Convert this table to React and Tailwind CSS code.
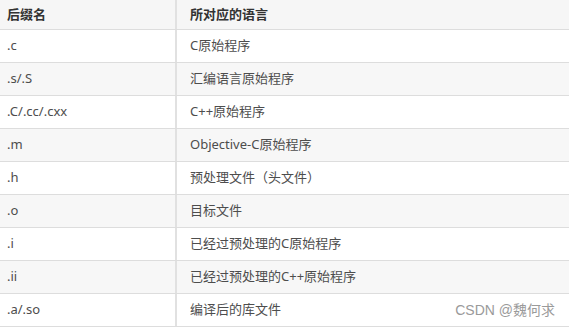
import React from "react";

const rows = [
  [".c", "C原始程序"],
  [".s/.S", "汇编语言原始程序"],
  [".C/.cc/.cxx", "C++原始程序"],
  [".m", "Objective-C原始程序"],
  [".h", "预处理文件（头文件）"],
  [".o", "目标文件"],
  [".i", "已经过预处理的C原始程序"],
  [".ii", "已经过预处理的C++原始程序"],
  [".a/.so", "编译后的库文件"],
];

export default function App() {
  return (
    <div
      className="relative w-[569px] h-[327px] overflow-hidden bg-white text-[13px] text-[#4d4d4d]"
      style={{ fontFamily: '"Noto Sans", "Noto Sans CJK SC", sans-serif' }}
    >
      <div className="flex h-[29px] bg-[#f6f6f6] font-bold text-[#333]">
        <div className="w-[177px] shrink-0 border-r-2 border-[#e1e1e1] pl-[7px] flex items-center">后缀名</div>
        <div className="flex-1 pl-[13px] flex items-center">所对应的语言</div>
      </div>
      {rows.map(([a, b], i) => (
        <div
          key={i}
          className={`flex h-[33px] border-t border-[#dddddd] ${i % 2 === 1 ? "bg-[#f7f7f7]" : "bg-white"}`}
        >
          <div className="w-[177px] shrink-0 border-r-2 border-[#e1e1e1] pl-[7px] flex items-center">{a}</div>
          <div className="flex-1 pl-[13px] flex items-center">{b}</div>
        </div>
      ))}
      <div className="h-px bg-[#dddddd]" />
      <div
        className="absolute right-[14px] bottom-[7px] text-[14px] leading-[20px] text-[#9a9a9a]"
        style={{ fontFamily: '"Liberation Sans", "Noto Sans CJK SC", sans-serif' }}
      >
        CSDN @魏何求
      </div>
    </div>
  );
}
